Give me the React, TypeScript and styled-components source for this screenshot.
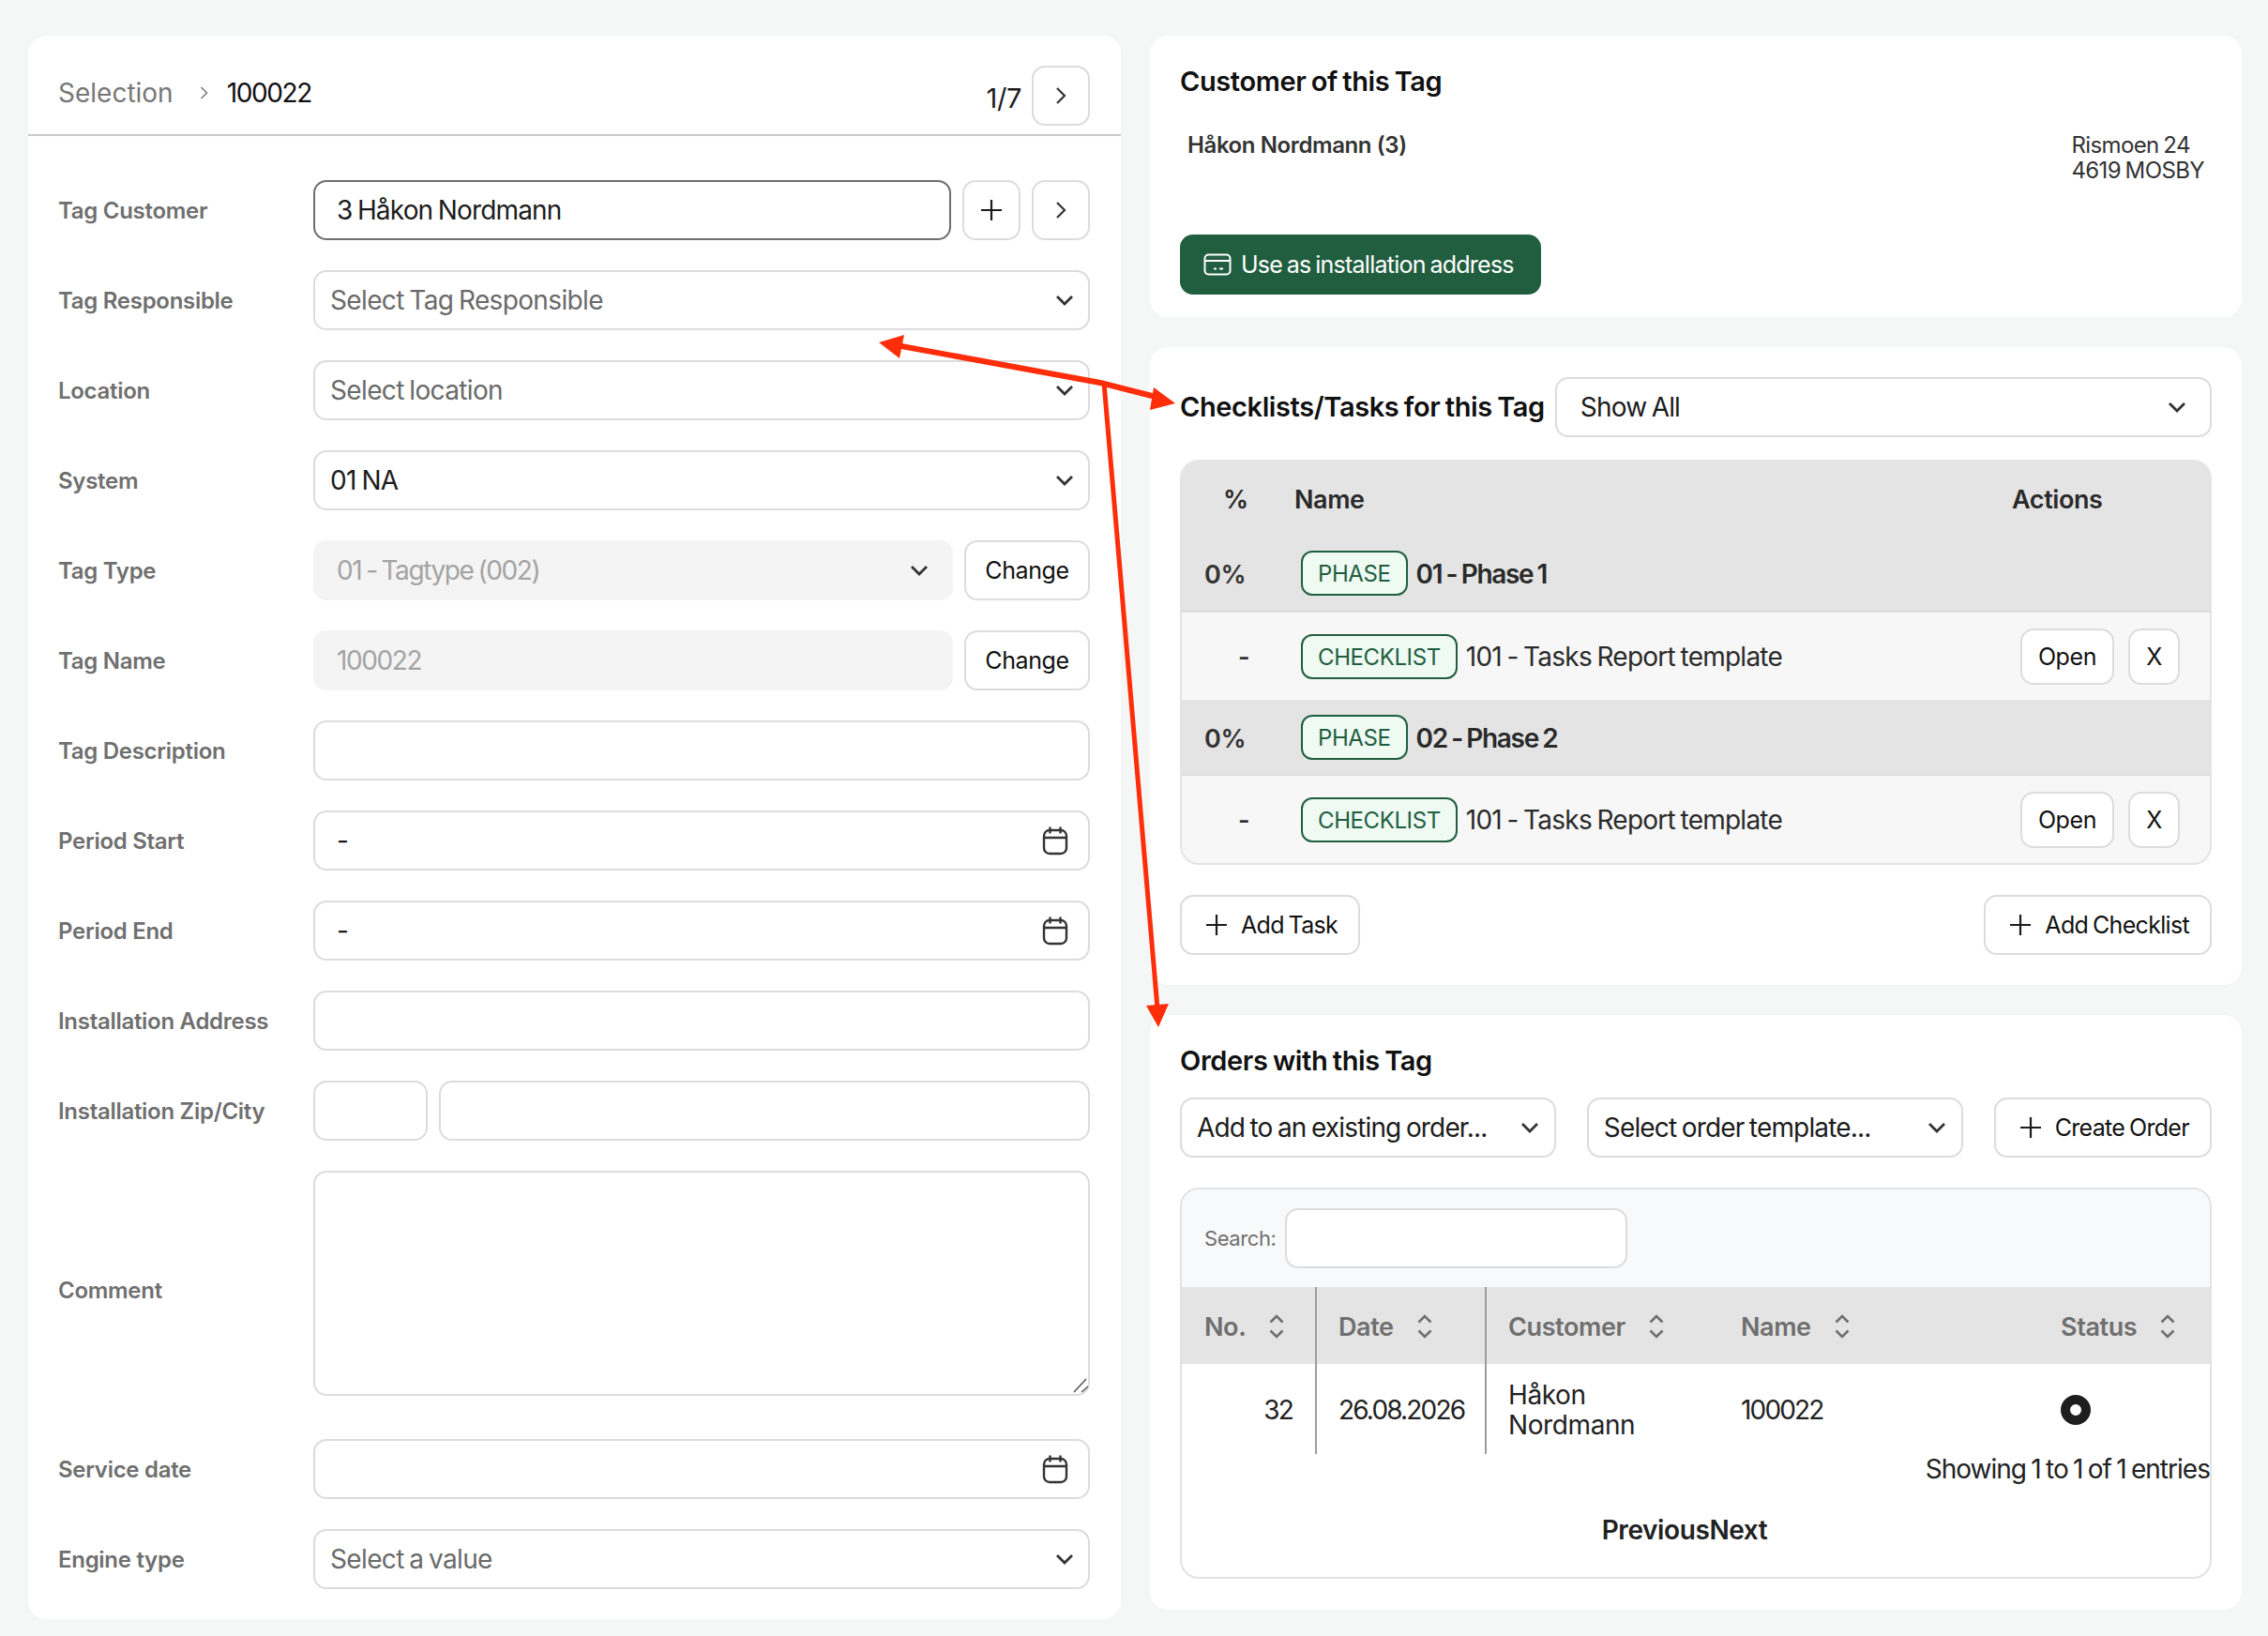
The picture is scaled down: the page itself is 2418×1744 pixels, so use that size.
import React from "react"
import styled, { createGlobalStyle } from "styled-components"

const GlobalStyle = createGlobalStyle`
  html, body {
    margin: 0;
    padding: 0;
    background: #f5f7f6;
  }
  body {
    font-family: "Inter", "Liberation Sans", sans-serif;
    color: #1c1c1c;
    letter-spacing: -0.025em;
    word-spacing: -0.1em;
  }
  * {
    box-sizing: border-box;
  }
`

function ChevronDown() {
  return (
    <svg width="20" height="12" viewBox="0 0 20 12" fill="none">
      <path d="M2 2l8 8 8-8" stroke="#333" strokeWidth="2.8" />
    </svg>
  )
}

function ChevronRight({ small }: { small?: boolean }) {
  return (
    <svg width={small ? 9 : 12} height={small ? 16 : 20} viewBox="0 0 12 20" fill="none">
      <path d="M2 2l8 8-8 8" stroke={small ? "#777" : "#333"} strokeWidth={small ? 2 : 2.2} />
    </svg>
  )
}

function Plus({ size = 24 }: { size?: number }) {
  return (
    <svg width={size} height={size} viewBox="0 0 24 24" fill="none">
      <path d="M12 1v22M1 12h22" stroke="#1c1c1c" strokeWidth="2.2" />
    </svg>
  )
}

function CalendarIcon() {
  return (
    <svg width="28" height="32" viewBox="0 0 28 32" fill="none" stroke="#333" strokeWidth="2.4">
      <rect x="2" y="5" width="24" height="25" rx="6" />
      <path d="M2 13h24M8.5 1.5v7M19.5 1.5v7" />
    </svg>
  )
}

function CardIcon() {
  return (
    <svg width="30" height="24" viewBox="0 0 30 24" fill="none" stroke="#fff" strokeWidth="2">
      <rect x="1.5" y="1.5" width="27" height="21" rx="4" />
      <path d="M1.5 8h27M11 16.5h3M17 16.5h4" />
    </svg>
  )
}

function SortIcon() {
  return (
    <svg width="16" height="26" viewBox="0 0 16 26" fill="none" stroke="#6f6f6f" strokeWidth="2.6">
      <path d="M1.5 8.5L8 2l6.5 6.5M1.5 17.5L8 24l6.5-6.5" />
    </svg>
  )
}

const fields = [
  { label: "Tag Responsible", kind: "select", value: "Select Tag Responsible", muted: true },
  { label: "Location", kind: "select", value: "Select location", muted: true },
  { label: "System", kind: "select", value: "01 NA" },
]

const plainFields = [
  { label: "Tag Description", value: "" },
  { label: "Period Start", value: "-", date: true },
  { label: "Period End", value: "-", date: true },
  { label: "Installation Address", value: "" },
]

export default function App() {
  return (
    <Page>
      <GlobalStyle />
      <LeftPanel>
        <Header>
          <Crumbs>
            <CrumbMuted>Selection</CrumbMuted>
            <ChevronRight small />
            <CrumbCurrent>100022</CrumbCurrent>
          </Crumbs>
          <Pager>
            <PagerText>1/7</PagerText>
            <IconButton><ChevronRight /></IconButton>
          </Pager>
        </Header>
        <Form>
          <Row>
            <Label>Tag Customer</Label>
            <FocusedField>3 Håkon Nordmann</FocusedField>
            <IconButton><Plus /></IconButton>
            <IconButton><ChevronRight /></IconButton>
          </Row>
          {fields.map(field => (
            <Row key={field.label}>
              <Label>{field.label}</Label>
              <Select $muted={field.muted}>
                {field.value}
                <ChevronDown />
              </Select>
            </Row>
          ))}
          <Row>
            <Label>Tag Type</Label>
            <DisabledSelect>
              01 - Tagtype (002)
              <ChevronDown />
            </DisabledSelect>
            <ChangeButton>Change</ChangeButton>
          </Row>
          <Row>
            <Label>Tag Name</Label>
            <DisabledSelect>100022</DisabledSelect>
            <ChangeButton>Change</ChangeButton>
          </Row>
          {plainFields.map(field => (
            <Row key={field.label}>
              <Label>{field.label}</Label>
              <Field>
                {field.value}
                {field.date && <CalendarIcon />}
              </Field>
            </Row>
          ))}
          <Row>
            <Label>Installation Zip/City</Label>
            <ZipField />
            <Field />
          </Row>
          <CommentRow>
            <Label>Comment</Label>
            <CommentBox>
              <Comment />
              <ResizeGrip viewBox="0 0 20 20">
                <path d="M16 2L3 16M18 10l-7 6" stroke="#555" strokeWidth="1.5" fill="none" />
              </ResizeGrip>
            </CommentBox>
          </CommentRow>
          <Row>
            <Label>Service date</Label>
            <Field>
              <span />
              <CalendarIcon />
            </Field>
          </Row>
          <Row>
            <Label>Engine type</Label>
            <Select $muted>
              Select a value
              <ChevronDown />
            </Select>
          </Row>
        </Form>
      </LeftPanel>

      <RightColumn>
        <CustomerPanel>
          <Title>Customer of this Tag</Title>
          <CustomerInfo>
            <CustomerName>Håkon Nordmann (3)</CustomerName>
            <Address>
              Rismoen 24
              <br />
              4619 MOSBY
            </Address>
          </CustomerInfo>
          <PrimaryButton>
            <CardIcon />
            Use as installation address
          </PrimaryButton>
        </CustomerPanel>

        <ChecklistPanel>
          <ChecklistHeader>
            <Title>Checklists/Tasks for this Tag</Title>
            <ShowAll>
              Show All
              <ChevronDown />
            </ShowAll>
          </ChecklistHeader>
          <TaskTable>
            <TaskHead>
              <PercentHead>%</PercentHead>
              <NameHead>Name</NameHead>
              <ActionsHead>Actions</ActionsHead>
            </TaskHead>
            <PhaseRow $first>
              <Percent>0%</Percent>
              <Pill>PHASE</Pill>
              <PhaseName>01 - Phase 1</PhaseName>
            </PhaseRow>
            <ChecklistRow>
              <Dash>-</Dash>
              <Pill>CHECKLIST</Pill>
              <ChecklistName>101 - Tasks Report template</ChecklistName>
              <OpenButton>Open</OpenButton>
              <CloseButton>X</CloseButton>
            </ChecklistRow>
            <PhaseRow>
              <Percent>0%</Percent>
              <Pill>PHASE</Pill>
              <PhaseName>02 - Phase 2</PhaseName>
            </PhaseRow>
            <ChecklistRow>
              <Dash>-</Dash>
              <Pill>CHECKLIST</Pill>
              <ChecklistName>101 - Tasks Report template</ChecklistName>
              <OpenButton>Open</OpenButton>
              <CloseButton>X</CloseButton>
            </ChecklistRow>
          </TaskTable>
          <ButtonRow>
            <AddButton><Plus />Add Task</AddButton>
            <AddButton><Plus />Add Checklist</AddButton>
          </ButtonRow>
        </ChecklistPanel>

        <OrdersPanel>
          <OrdersTitle>Orders with this Tag</OrdersTitle>
          <OrderControls>
            <OrderSelect>
              Add to an existing order...
              <ChevronDown />
            </OrderSelect>
            <OrderSelect>
              Select order template...
              <ChevronDown />
            </OrderSelect>
            <AddButton><Plus />Create Order</AddButton>
          </OrderControls>
          <OrdersBox>
            <SearchBar>
              <SearchLabel>Search:</SearchLabel>
              <SearchInput />
            </SearchBar>
            <OrderHead>
              <HeadCell $divider>No.<SortIcon /></HeadCell>
              <HeadCell $divider>Date<SortIcon /></HeadCell>
              <HeadCell>Customer<SortIcon /></HeadCell>
              <HeadCell>Name<SortIcon /></HeadCell>
              <HeadCell>Status<SortIcon /></HeadCell>
            </OrderHead>
            <OrderRow>
              <NumberCell $divider><Digits>32</Digits></NumberCell>
              <BodyCell $divider><Digits>26.08.2026</Digits></BodyCell>
              <BodyCell>Håkon<br />Nordmann</BodyCell>
              <BodyCell><Digits>100022</Digits></BodyCell>
              <BodyCell><StatusDot /></BodyCell>
            </OrderRow>
            <Entries>Showing 1 to 1 of 1 entries</Entries>
            <Paging>PreviousNext</Paging>
          </OrdersBox>
        </OrdersPanel>
      </RightColumn>

      <Annotations viewBox="0 0 2418 1744">
        <path d="M950 367L1173 408L1240 425" stroke="#ff2d0a" strokeWidth="6" fill="none" />
        <path d="M1177 408L1234 1075" stroke="#ff2d0a" strokeWidth="5" fill="none" />
        <path d="M937 365L964 357L959 382Z M1253 430L1230 413L1226 437Z M1235 1095L1222 1072L1246 1070Z" fill="#ff2d0a" />
      </Annotations>
    </Page>
  )
}

const Page = styled.div`
  position: relative;
  width: 2418px;
  height: 1744px;
  padding: 38px 28px 18px 30px;
  display: grid;
  grid-template-columns: 1165px 1164px;
  column-gap: 31px;
  align-items: start;
  overflow: hidden;
`

const Annotations = styled.svg`
  position: absolute;
  top: 0;
  left: 0;
  width: 2418px;
  height: 1744px;
  pointer-events: none;
`

const Panel = styled.section`
  background: #fff;
  border-radius: 20px;
`

const LeftPanel = styled(Panel)`
  height: 1688px;
`

const Header = styled.header`
  height: 107px;
  padding: 32px 33px 0 32px;
  display: flex;
  justify-content: space-between;
  align-items: flex-start;
  border-bottom: 2px solid #c9c9c9;
`

const Crumbs = styled.div`
  display: flex;
  align-items: center;
  height: 58px;
  font-size: 28px;
  gap: 28px;
`

const CrumbMuted = styled.span`
  color: #777;
  letter-spacing: 0;
`

const CrumbCurrent = styled.span`
  color: #111;
  margin-left: -8px;
  letter-spacing: -0.05em;
`

const Pager = styled.div`
  display: flex;
  align-items: center;
  gap: 11px;
`

const PagerText = styled.span`
  font-size: 29px;
  padding-top: 4px;
`

const OutlineButton = styled.div`
  height: 64px;
  display: flex;
  align-items: center;
  justify-content: center;
  background: #fff;
  border: 2px solid #dcdcdc;
  border-radius: 14px;
  font-size: 25px;
  color: #111;
`

const IconButton = styled(OutlineButton)`
  width: 62px;
  flex: none;
`

const ChangeButton = styled(OutlineButton)`
  width: 134px;
  flex: none;
`

const Form = styled.div`
  padding: 47px 33px 0 32px;
  display: flex;
  flex-direction: column;
  gap: 32px;
`

const Row = styled.div`
  display: flex;
  align-items: center;
  gap: 12px;
  height: 64px;
`

const CommentRow = styled(Row)`
  height: 254px;
  align-items: flex-start;
`

const Label = styled.label`
  width: 260px;
  flex: none;
  font-size: 24px;
  font-weight: 600;
  color: #6f6f6f;
  align-self: center;
  word-spacing: 0;
  letter-spacing: -0.012em;
`

const Field = styled.div`
  flex: 1;
  height: 64px;
  padding: 0 21px 0 23px;
  display: flex;
  align-items: center;
  justify-content: space-between;
  background: #fff;
  border: 2px solid #dcdcdc;
  border-radius: 14px;
  font-size: 28px;
`

const FocusedField = styled(Field)`
  border-color: #6e6e6e;
  letter-spacing: -0.03em;
`

const ZipField = styled(Field)`
  flex: none;
  width: 122px;
`

const Select = styled(Field)<{ $muted?: boolean }>`
  padding: 0 15px 0 16px;
  color: ${props => (props.$muted ? "#6a6a6a" : "#1c1c1c")};
  letter-spacing: -0.023em;
`

const DisabledSelect = styled(Field)`
  padding-right: 24px;
  color: #a4a4a4;
  background: #f4f4f4;
  border-color: #f4f4f4;
  letter-spacing: -0.05em;
`

const CommentBox = styled.div`
  position: relative;
  flex: 1;
  height: 240px;
`

const Comment = styled.textarea`
  display: block;
  width: 100%;
  height: 240px;
  border: 2px solid #dcdcdc;
  border-radius: 14px;
  outline: none;
  resize: none;
`

const ResizeGrip = styled.svg`
  position: absolute;
  right: 0;
  bottom: 0;
  width: 20px;
  height: 20px;
`

const RightColumn = styled.div`
  display: flex;
  flex-direction: column;
  gap: 32px;
`

const Title = styled.h2`
  margin: 0;
  font-size: 29px;
  line-height: 34px;
  font-weight: 600;
  color: #111;
  white-space: nowrap;
  word-spacing: -0.05em;
`

const CustomerPanel = styled(Panel)`
  height: 300px;
  padding: 32px;
`

const CustomerInfo = styled.div`
  margin-top: 37px;
  height: 71px;
  padding: 0 8px;
  display: flex;
  justify-content: space-between;
  font-size: 24px;
  line-height: 27px;
`

const CustomerName = styled.div`
  font-weight: 600;
  color: #333;
  word-spacing: 0;
`

const Address = styled.div`
  color: #333;
  letter-spacing: -0.025em;
`

const PrimaryButton = styled.div`
  margin-top: 38px;
  width: 385px;
  height: 64px;
  display: flex;
  align-items: center;
  gap: 10px;
  padding-left: 25px;
  background: #215e3f;
  border-radius: 14px;
  color: #fff;
  font-size: 25px;
  letter-spacing: -0.03em;
  white-space: nowrap;
`

const ChecklistPanel = styled(Panel)`
  height: 680px;
  padding: 32px;
`

const ChecklistHeader = styled.div`
  display: flex;
  align-items: center;
  gap: 11px;
`

const ShowAll = styled(Field)`
  padding: 0 25px;
  letter-spacing: -0.03em;
`

const TaskTable = styled.div`
  margin-top: 24px;
  height: 432px;
  display: flex;
  flex-direction: column;
  border: 2px solid #e4e4e4;
  border-top: 0;
  border-radius: 20px;
  overflow: hidden;
  background: #f7f7f7;
`

const TaskHead = styled.div`
  height: 80px;
  flex: none;
  padding-top: 5px;
  display: flex;
  align-items: center;
  background: #e4e4e4;
  font-size: 27px;
  font-weight: 600;
  color: #2a2a2a;
`

const PercentHead = styled.span`
  width: 120px;
  padding-left: 44px;
`

const NameHead = styled.span`
  flex: 1;
`

const ActionsHead = styled.span`
  width: 211px;
`

const PhaseRow = styled.div<{ $first?: boolean }>`
  height: ${props => (props.$first ? "83px" : "81px")};
  flex: none;
  display: flex;
  align-items: center;
  background: #e4e4e4;
  border-bottom: 2px solid #dcdcdc;
`

const ChecklistRow = styled.div`
  flex: 1;
  display: flex;
  align-items: center;
  padding-right: 32px;
`

const Percent = styled.span`
  width: 127px;
  padding: 3px 0 0 24px;
  font-size: 27px;
  font-weight: 600;
  color: #333;
`

const Dash = styled.span`
  width: 127px;
  padding: 1px 0 0 60px;
  font-size: 27px;
  font-weight: 600;
  color: #333;
`

const Pill = styled.span`
  height: 48px;
  padding: 1px 16px 0;
  display: flex;
  align-items: center;
  background: #effaf3;
  border: 2px solid #215e3f;
  border-radius: 12px;
  color: #215e3f;
  font-size: 24px;
`

const PhaseName = styled.span`
  margin-left: 9px;
  padding-top: 2px;
  font-size: 28px;
  font-weight: 600;
  color: #2a2a2a;
  letter-spacing: -0.047em;
  word-spacing: -0.05em;
`

const ChecklistName = styled.span`
  flex: 1;
  margin-left: 9px;
  font-size: 28px;
  color: #2a2a2a;
  letter-spacing: -0.027em;
`

const OpenButton = styled(OutlineButton)`
  width: 100px;
  height: 60px;
`

const CloseButton = styled(OutlineButton)`
  width: 55px;
  height: 60px;
  margin-left: 15px;
`

const ButtonRow = styled.div`
  margin-top: 32px;
  display: flex;
  justify-content: space-between;
`

const AddButton = styled(OutlineButton)`
  gap: 14px;
  padding: 0 22px 0 25px;
  letter-spacing: -0.027em;
  white-space: nowrap;
`

const OrdersPanel = styled(Panel)`
  height: 634px;
  padding: 32px;
`

const OrdersTitle = styled(Title)``

const OrderControls = styled.div`
  margin-top: 22px;
  display: flex;
  gap: 33px;
`

const OrderSelect = styled(Select)`
  padding-right: 16px;
  letter-spacing: -0.03em;
  white-space: nowrap;
`

const OrdersBox = styled.div`
  margin-top: 32px;
  height: 417px;
  border: 2px solid #e2e2e2;
  border-radius: 20px;
  overflow: hidden;
`

const SearchBar = styled.div`
  height: 104px;
  padding-left: 24px;
  display: flex;
  align-items: center;
  gap: 9px;
  background: #f8f9fa;
`

const SearchLabel = styled.span`
  font-size: 22px;
  color: #6f6f6f;
`

const SearchInput = styled.div`
  width: 365px;
  height: 64px;
  background: #fff;
  border: 2px solid #dcdcdc;
  border-radius: 14px;
`

const orderColumns = "144px 181px 248px 341px 1fr"

const OrderHead = styled.div`
  height: 82px;
  display: grid;
  grid-template-columns: ${orderColumns};
  background: #e4e4e4;
`

const HeadCell = styled.div<{ $divider?: boolean }>`
  padding: 2px 0 0 23px;
  display: flex;
  align-items: center;
  gap: 25px;
  font-size: 27px;
  font-weight: 600;
  color: #6f6f6f;
  border-right: ${props => (props.$divider ? "2px solid #9c9c9c" : "0")};

  &:first-child {
    padding-left: 24px;
  }
`

const OrderRow = styled.div`
  height: 96px;
  display: grid;
  grid-template-columns: ${orderColumns};
`

const BodyCell = styled.div<{ $divider?: boolean }>`
  padding: 1px 0 0 23px;
  display: flex;
  align-items: center;
  font-size: 28px;
  line-height: 32px;
  color: #222;
  border-right: ${props => (props.$divider ? "2px solid #9c9c9c" : "0")};
`

const Digits = styled.span`
  letter-spacing: -0.065em;
`

const NumberCell = styled(BodyCell)`
  justify-content: flex-end;
  padding-right: 24px;
`

const StatusDot = styled.span`
  width: 32px;
  height: 32px;
  border-radius: 50%;
  border: 10px solid #1e1e1e;
  background: #fff;
`

const Entries = styled.div`
  height: 32px;
  text-align: right;
  font-size: 28px;
  line-height: 32px;
  color: #222;
  letter-spacing: -0.035em;
`

const Paging = styled.div`
  margin-top: 32px;
  padding-right: 24px;
  text-align: center;
  font-size: 28px;
  font-weight: 600;
  color: #222;
`
